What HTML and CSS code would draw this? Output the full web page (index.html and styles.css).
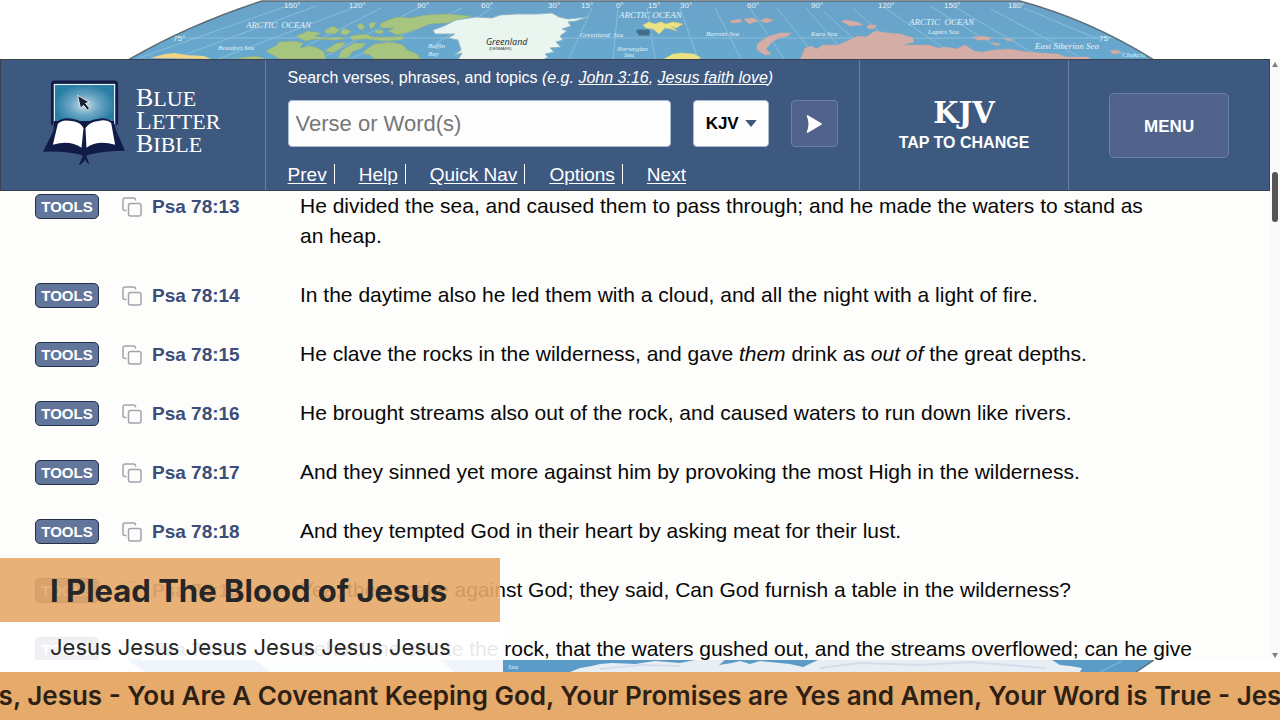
FILE: index.html
```html
<!DOCTYPE html>
<html lang="en">
<head>
<meta charset="utf-8">
<meta name="viewport" content="width=device-width, initial-scale=1">
<title>Psalm 78 - Blue Letter Bible</title>
<link rel="stylesheet" href="styles.css">
</head>
<body>
<svg width="0" height="0" class="defs" aria-hidden="true">
  <defs>
    <symbol id="copy" viewBox="0 0 20 20">
      <path d="M4.5 13.5H3a2 2 0 0 1-2-2V3a2 2 0 0 1 2-2h8.500a2 2 0 0 1 2 2v.5" fill="none" stroke="#a3a4af" stroke-width="1.500"/>
      <rect x="6.500" y="6.500" width="12.500" height="12.500" rx="2" fill="none" stroke="#a3a4af" stroke-width="1.500"/>
    </symbol>
  </defs>
</svg>

<svg class="map-top" viewBox="0 0 1280 59" preserveAspectRatio="none" role="img" aria-label="World map, Arctic Ocean">
  <defs>
    <clipPath id="globe"><path d="M128 60Q190 24 262 1H1020Q1090 20 1154 60Z"/></clipPath>
    <linearGradient id="sea" x1="0" y1="0" x2="0" y2="1"><stop offset="0" stop-color="#6aa2c8"/><stop offset="1" stop-color="#67a9cf"/></linearGradient>
  </defs>
  <g clip-path="url(#globe)">
    <rect width="1280" height="60" fill="url(#sea)"/>
    <g fill="none" stroke="#8abddb" stroke-width="1">
      <path d="M160 38H1120M290 5L139 58M316 6L176 58M358 6L218 59M381 8L283 58M420 7L320 59M462 8L350 59M492 8L435 44M592 8L569 59M618 8L613 59M647 8L655 59M680 8L698 59M715 8L741 59M750 8L784 59M777 8L818 59M806 8L850 59M824 12L852 37M853 8L880 32M885 8L944 48M930 6L994 45M955 7L1033 53M991 9L1078 56M1024 8L1098 39"/>
    </g>
    <path d="M150 58L165 54L175 53L186 55L204 56L211 59Z" fill="#f2d488"/>
    <g fill="#a8c580" stroke="#8aad83" stroke-width=".6">
      <path d="M267 50L276 46L279 42L294 41L303 43L300 48L310 46L318 48L324 52L326 59H280L267 52Z"/>
      <path d="M296 36L304 33L307 31L315 32L321 33L315 36L324 38L340 37L346 39L334 40L316 39L305 41Z"/>
      <path d="M380 24L388 20L397 17L410 18L426 15L447 14L472 16L460 20L447 23L430 24L418 29L406 33L397 35L388 31L394 28L381 28Z"/>
      <path d="M325 30L333 26L340 30L335 34L325 33M343 28L351 31L347 35L340 34M357 25L362 23L365 28L360 30M369 23L376 22L374 27L370 29M350 36L364 34L374 37L390 37L404 36L402 40L384 41L367 39L352 40M327 49L337 43L346 42L341 48L333 53L325 51M342 50L354 43L366 43L362 48L352 52L348 58L338 58M364 51L374 44L392 42L403 45L407 50L417 54L421 59H374L370 55L364 54M376 30L384 30L382 34L375 33"/>
      <path d="M236 59L245 57L255 56L264 58V60Z"/>
    </g>
    <path d="M433 30L444 26L456 20L476 17L492 18L500 15L517 14L537 14L552 13L559 17L568 19L588 17L576 21L568 22L571 26L562 29L567 31L560 36L563 40L556 42L561 47L550 48L554 52L545 54L548 57L543 60H458L462 53L454 55L461 50L458 40L448 38L455 34L435 34Z" fill="#eaf5f0" stroke="#8db7c5" stroke-width="1"/>
    <path d="M643 25L649 22L655 24L661 22L666 24L673 22L683 24L676 28L671 26L677 31L671 29L665 28L659 34L653 29L646 28ZM664 59L673 54L682 53L694 54L700 57V60H664Z" fill="#ebe381" stroke="#d2d17e" stroke-width=".5"/>
    <g fill="#d4aea6" stroke="#c8a6a4" stroke-width=".5">
      <path d="M730 21L740 19L742 22L732 23ZM744 19L753 18L758 21L749 24ZM760 21L766 18L773 20L767 23Z"/>
      <path d="M791 33L780 33L767 37L757 44L757 50L765 55L771 54L766 49L772 42L779 38L788 36Z"/>
      <path d="M800 60L805 48L812 46L816 49L823 45L838 45L845 42L858 36L866 37L875 31L889 33L901 34L913 38L914 42L902 45L918 45L929 45L938 48L947 47L956 49L965 45L974 51L982 52L994 50L1008 49L1029 52L1041 53L1058 54L1066 57H1088L1091 60Z"/>
      <path d="M841 21L847 20L857 22L863 25L850 26ZM868 25L877 25L873 29L867 28ZM973 37L982 36L992 38L988 40L977 40ZM1003 38L1014 40L1008 41ZM991 42L1000 44L997 46ZM1110 51L1117 50L1122 53L1113 54Z"/>
    </g>
    <path d="M637 30H649V35H639ZM636 32H651" fill="#426f8c" stroke="#426f8c"/>
    <g class="map-degree"><text x="284" y="8">150°</text><text x="349" y="8">120°</text><text x="417" y="8">90°</text><text x="481" y="8">60°</text><text x="548" y="8">30°</text><text x="581" y="8">15°</text><text x="616" y="8">0°</text><text x="648" y="8">15°</text><text x="680" y="8">30°</text><text x="747" y="8">60°</text><text x="811" y="8">90°</text><text x="878" y="8">120°</text><text x="944" y="8">150°</text><text x="1008" y="8">180°</text><text x="173" y="41">75°</text><text x="1099" y="41">75°</text></g>
    <g class="map-ocean"><text x="246" y="28">ARCTIC&#160; OCEAN</text><text x="619" y="18">ARCTIC OCEAN</text><text x="909" y="25">ARCTIC&#160; OCEAN</text><text x="1035" y="49">East Siberian Sea</text></g>
    <g class="map-sea"><text x="218" y="50">Beaufort Sea</text><text x="428" y="48">Baffin</text><text x="428" y="56">Bay</text><text x="580" y="37">Greenland&#160; Sea</text><text x="617" y="51">Norwegian</text><text x="624" y="57">Sea</text><text x="706" y="36">Barents Sea</text><text x="811" y="36">Kara Sea</text><text x="928" y="34">Laptev Sea</text><text x="1122" y="57">Chukchi</text></g>
    <text class="map-land" x="486" y="45">Greenland</text><text class="map-note" x="489" y="50">(DENMARK)</text>
  </g>
  <path d="M128 60Q190 24 262 1H1020Q1090 20 1154 60" fill="none" stroke="#5d6e77" stroke-width="1.500"/>
</svg>

<div class="window">
  <div class="page">
    <header class="toolbar">
      <a class="brand" href="#home">
        <svg class="brand-logo" viewBox="0 0 84 86" aria-hidden="true">
          <defs><radialGradient id="screen"><stop offset="0" stop-color="#c5dfe9"/><stop offset=".5" stop-color="#68a4c2"/><stop offset="1" stop-color="#287da5"/></radialGradient></defs>
          <rect x="8" y="0" width="68" height="46" rx="4" fill="#101b48"/>
          <rect x="11.500" y="4" width="61" height="42" fill="url(#screen)" stroke="#eaf5fa" stroke-width="1.200"/>
          <path d="M11 50L0 72Q22 71 37 75L42 77L47 75Q62 71 83 71L72 46V41H11Z" fill="#101b48"/>
          <path d="M11 45Q18 36 30 39Q39 40 42 46Q46 40 55 39Q66 36 73 45L74 65Q52 62 42 70Q32 62 10 66Z" fill="#101b48"/>
          <path d="M15 44Q19 39 29 41Q38 42 41 48L39 68Q27 60 10 65ZM43 48Q47 42 56 41Q65 39 69 43L73 65Q55 60 44 68Z" fill="#fff"/>
          <path d="M41 76L37 85L41 82L42 79L46 84L43 75Z" fill="#101b48" stroke="#101b48"/>
          <path d="M35 15L38 28L41 25L45 30L47 28L43 23L47 22Z" fill="#172035" stroke="#fff" stroke-width=".8"/>
        </svg>
        <span class="brand-name"><span>Blue</span><span>Letter</span><span>Bible</span></span>
      </a>
      <form class="search">
        <label class="hint" for="query">Search verses, phrases, and topics <i>(e.g. <a href="#john">John 3:16</a>, <a href="#faith">Jesus faith love</a>)</i></label>
        <div class="fields">
          <input id="query" class="query" type="text" placeholder="Verse or Word(s)">
          <div class="version">
            <select class="version-select" aria-label="Translation"><option>KJV</option></select>
            <svg class="caret" viewBox="0 0 12 7" aria-hidden="true"><path d="M1 0H11Q12 0 11 1L6 7L1 1Q0 0 1 0Z" fill="#3e587f"/></svg>
          </div>
          <button class="go" type="button" aria-label="Search"><svg viewBox="0 0 16 18" aria-hidden="true"><path d="M1.500 1L15 9L1.500 17Q5 9 1.500 1Z" fill="#fff" stroke="#fff" stroke-width="1.500" stroke-linejoin="round"/></svg></button>
        </div>
        <nav class="links"><a href="#prev">Prev</a><a href="#help">Help</a><a href="#nav">Quick Nav</a><a href="#options">Options</a><a href="#next">Next</a></nav>
      </form>
      <button class="change" type="button"><span class="change-code">KJV</span><span>TAP TO CHANGE</span></button>
      <div class="menu-cell"><button class="menu" type="button">MENU</button></div>
    </header>
    <main class="verses">
      <article class="verse"><button class="tools" type="button">TOOLS</button><svg class="copy"><use href="#copy"/></svg><a class="ref" href="#v13">Psa 78:13</a><p>He divided the sea, and caused them to pass through; and he made the waters to stand as<br>an heap.</p></article>
      <article class="verse"><button class="tools" type="button">TOOLS</button><svg class="copy"><use href="#copy"/></svg><a class="ref" href="#v14">Psa 78:14</a><p>In the daytime also he led them with a cloud, and all the night with a light of fire.</p></article>
      <article class="verse"><button class="tools" type="button">TOOLS</button><svg class="copy"><use href="#copy"/></svg><a class="ref" href="#v15">Psa 78:15</a><p>He clave the rocks in the wilderness, and gave <i>them</i> drink as <i>out of</i> the great depths.</p></article>
      <article class="verse"><button class="tools" type="button">TOOLS</button><svg class="copy"><use href="#copy"/></svg><a class="ref" href="#v16">Psa 78:16</a><p>He brought streams also out of the rock, and caused waters to run down like rivers.</p></article>
      <article class="verse"><button class="tools" type="button">TOOLS</button><svg class="copy"><use href="#copy"/></svg><a class="ref" href="#v17">Psa 78:17</a><p>And they sinned yet more against him by provoking the most High in the wilderness.</p></article>
      <article class="verse"><button class="tools" type="button">TOOLS</button><svg class="copy"><use href="#copy"/></svg><a class="ref" href="#v18">Psa 78:18</a><p>And they tempted God in their heart by asking meat for their lust.</p></article>
      <article class="verse"><button class="tools" type="button">TOOLS</button><svg class="copy"><use href="#copy"/></svg><a class="ref" href="#v19">Psa 78:19</a><p>Yea, they spake against God; they said, Can God furnish a table in the wilderness?</p></article>
      <article class="verse"><button class="tools" type="button">TOOLS</button><svg class="copy"><use href="#copy"/></svg><a class="ref" href="#v20">Psa 78:20</a><p>Behold, he smote the rock, that the waters gushed out, and the streams overflowed; can he give</p></article>
    </main>
  </div>
  <div class="scrollbar" aria-hidden="true">
    <svg class="arrow" viewBox="0 0 6 5"><path d="M3 0L6 5H0Z" fill="#808080"/></svg>
    <span class="thumb"></span>
    <svg class="arrow" viewBox="0 0 6 5"><path d="M3 5L6 0H0Z" fill="#808080"/></svg>
  </div>
</div>

<svg class="map-bottom" viewBox="0 0 1280 12" preserveAspectRatio="none" role="img" aria-label="World map, Antarctica">
  <path d="M127 0H1154L1136 12H145Z" fill="#5a9bc8"/>
  <path d="M570 12L580 8L592 6L600 4L612 3L635 4L655 1L680 3L695 0H725L719 5L732 3L740 1L750 4L760 1L790 4L803 7L818 0H1052L1060 5L1070 6L1082 8L1080 12Z" fill="#e8eff4"/>
  <path d="M255 0H440L455 12H270Z" fill="#e8eff4"/>
  <path d="M600 9L640 5L680 6M820 8L860 3L920 5L970 2L1045 8" fill="none" stroke="#d2dfeb" stroke-width="2"/>
  <path d="M1100 12L1122 1" stroke="#8ebcdb"/>
  <path d="M1154 0L1136 12" stroke="#536979" stroke-width="1.500"/>
  <text class="map-sea" x="508" y="9">Sea</text>
</svg>

<aside class="caption">
  <h1 class="caption-title">I Plead The Blood of Jesus</h1>
  <p class="caption-text">Jesus Jesus Jesus Jesus Jesus Jesus</p>
</aside>
<footer class="ticker"><span>s, Jesus - You Are A Covenant Keeping God, Your Promises are Yes and Amen, Your Word is True - Jes</span></footer>
</body>
</html>
```

FILE: styles.css
```css
* { box-sizing: border-box; }
body {
  margin: 0;
  height: 100vh;
  display: flex;
  flex-direction: column;
  overflow: hidden;
  position: relative;
  background: #fff;
  color: #080808;
  font-family: "Liberation Sans", Arial, sans-serif;
}
button, input, select { font-family: inherit; }
.defs { position: absolute; }

.map-top { width: 100%; height: 59px; flex: none; display: block; }
.map-bottom { width: 100%; height: 12px; flex: none; display: block; }
.map-degree { font: 8px "Liberation Sans", sans-serif; fill: #e3f1f8; }
.map-ocean { font: italic 9px "Liberation Serif", serif; fill: #e3f1f8; }
.map-sea { font: italic 7px "Liberation Serif", serif; fill: #e3f1f8; }
.map-land { font: italic 9px "Noto Sans", sans-serif; fill: #29393c; }
.map-note { font: 4px "Liberation Sans", sans-serif; fill: #29393c; }

.window { flex: 1; min-height: 0; display: flex; background: #fdfdfb; }
.page { flex: 1; min-width: 0; display: flex; flex-direction: column; overflow: hidden; }

.toolbar {
  flex: none;
  display: grid;
  grid-template-columns: 265fr 595fr 210fr 200fr;
  min-height: 132px;
  background: #3e597f;
  border: 1px solid #3a404b;
  color: #fff;
}
.toolbar > * { border-right: 1px solid #6680a8; }
.toolbar > :last-child { border-right: 0; }
.brand {
  display: flex;
  align-items: center;
  gap: 10px;
  padding: 0 0 4px 42px;
  color: #fff;
  text-decoration: none;
}
.brand-logo { width: 83px; height: 86px; }
.brand-name {
  display: flex;
  flex-direction: column;
  padding-bottom: 3px;
  font: 22px/23px "Liberation Serif", "Times New Roman", serif;
  text-transform: uppercase;
}
.brand-name span::first-letter { font-size: 26px; line-height: 20px; }

.search { display: flex; flex-direction: column; padding: 8px 21px 2px 22px; }
.hint { font-size: 16px; line-height: 20px; }
.hint a { color: inherit; }
.fields { display: flex; padding-top: 12px; gap: 22px; height: 59px; }
.query {
  flex: 1;
  min-width: 0;
  padding: 0 7px;
  border: 1px solid #a9bad2;
  border-radius: 4px;
  background: #fdfdfd;
  font-size: 22px;
}
.query::placeholder { color: #777; opacity: 1; }
.version { position: relative; width: 76px; }
.version-select {
  appearance: none;
  width: 100%;
  height: 100%;
  padding: 0 12px;
  border: 1px solid #a9bad2;
  border-radius: 4px;
  background: #fdfdfd;
  color: #000;
  font-size: 17px;
  font-weight: bold;
}
.caret { position: absolute; right: 12px; top: 20px; width: 12px; height: 7px; pointer-events: none; }
.go {
  width: 47px;
  display: flex;
  align-items: center;
  justify-content: center;
  border: 1px solid #6980a8;
  border-radius: 4px;
  background: #51638a;
}
.go svg { width: 16px; height: 18px; }
.links { display: flex; gap: 32px; padding-top: 17px; font-size: 19px; line-height: 22px; }
.links a { color: inherit; position: relative; text-underline-offset: 2px; }
.links a:not(:last-child)::after {
  content: "";
  position: absolute;
  right: -8px;
  top: 0;
  width: 1px;
  height: 20px;
  background: #fff;
}
.change {
  display: flex;
  flex-direction: column;
  align-items: center;
  justify-content: center;
  padding: 0;
  border-width: 0 1px 0 0;
  background: none;
  color: #fff;
  font-size: 16px;
  line-height: 24px;
  font-weight: bold;
}
.change-code { font: bold 29px/36px "DejaVu Serif", serif; }
.menu-cell { display: flex; align-items: center; justify-content: center; }
.menu {
  width: 120px;
  height: 65px;
  padding-top: 4px;
  border: 1px solid #6980a8;
  border-radius: 5px;
  background: #51638a;
  color: #fff;
  font-size: 17px;
  font-weight: bold;
}

.verses { display: flex; flex-direction: column; gap: 29px; padding-left: 35px; }
.verse { display: grid; grid-template-columns: 87px 30px 148px 1fr; align-items: start; }
.verse p { margin: 0; padding-right: 60px; font-size: 21px; line-height: 30px; }
.tools {
  width: 64px;
  height: 25px;
  margin-top: 3px;
  padding: 0;
  border: 1px solid #25304a;
  border-radius: 5px;
  background: #62769b;
  color: #fff;
  font-size: 15px;
  line-height: 20px;
  font-weight: bold;
}
.copy { width: 20px; height: 20px; margin-top: 6px; }
.ref { color: #3b4d78; font-size: 19px; line-height: 32px; font-weight: bold; text-decoration: none; height: 30px; }

.scrollbar {
  width: 10px;
  display: flex;
  flex-direction: column;
  align-items: center;
  padding: 3px 0 2px;
  background: #fafafa;
}
.arrow { width: 6px; height: 5px; flex: none; }
.thumb { width: 6px; height: 50px; margin: 105px 0 auto; border-radius: 3px; background: #555; }

.caption { position: absolute; left: 0; bottom: 48px; color: #262626; font-family: Inter, sans-serif; }
.caption-title {
  width: 500px;
  margin: 0;
  padding: 2px 0 0 50px;
  background: rgba(230, 169, 104, .9);
  font-size: 31px;
  line-height: 62px;
  font-weight: 700;
  white-space: nowrap;
}
.caption-text {
  width: 503px;
  margin: 0;
  padding-left: 50px;
  background: rgba(255, 255, 255, .9);
  font-size: 22px;
  line-height: 50px;
  white-space: nowrap;
}
.ticker {
  flex: none;
  display: flex;
  justify-content: center;
  overflow: hidden;
  background: #e6aa6b;
  color: #2d2115;
  font: 600 26px/48px Inter, sans-serif;
  white-space: nowrap;
}
```
